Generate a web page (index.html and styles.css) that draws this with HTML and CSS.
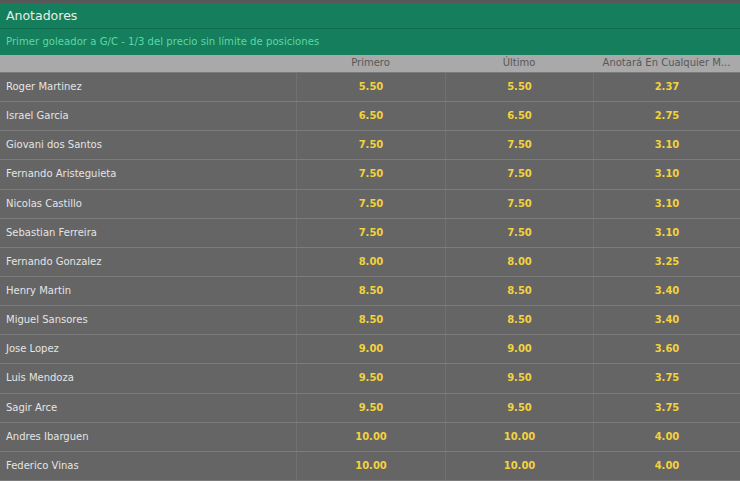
FILE: index.html
```html
<!DOCTYPE html>
<html lang="es">
<head>
<meta charset="utf-8">
<link rel="stylesheet" href="styles.css">
</head>
<body>
<div class="market">
  <div class="title">Anotadores</div>
  <div class="subtitle">Primer goleador a G/C - 1/3 del precio sin límite de posiciones</div>
  <div class="grid head">
    <div class="c name"></div>
    <div class="c">Primero</div>
    <div class="c">Último</div>
    <div class="c" title="Anotará En Cualquier Momento">Anotará En Cualquier M...</div>
  </div>
  <div class="grid row"><div class="c name">Roger Martinez</div><div class="c odd">5.50</div><div class="c odd">5.50</div><div class="c odd">2.37</div></div>
  <div class="grid row"><div class="c name">Israel Garcia</div><div class="c odd">6.50</div><div class="c odd">6.50</div><div class="c odd">2.75</div></div>
  <div class="grid row"><div class="c name">Giovani dos Santos</div><div class="c odd">7.50</div><div class="c odd">7.50</div><div class="c odd">3.10</div></div>
  <div class="grid row"><div class="c name">Fernando Aristeguieta</div><div class="c odd">7.50</div><div class="c odd">7.50</div><div class="c odd">3.10</div></div>
  <div class="grid row"><div class="c name">Nicolas Castillo</div><div class="c odd">7.50</div><div class="c odd">7.50</div><div class="c odd">3.10</div></div>
  <div class="grid row"><div class="c name">Sebastian Ferreira</div><div class="c odd">7.50</div><div class="c odd">7.50</div><div class="c odd">3.10</div></div>
  <div class="grid row"><div class="c name">Fernando Gonzalez</div><div class="c odd">8.00</div><div class="c odd">8.00</div><div class="c odd">3.25</div></div>
  <div class="grid row"><div class="c name">Henry Martin</div><div class="c odd">8.50</div><div class="c odd">8.50</div><div class="c odd">3.40</div></div>
  <div class="grid row"><div class="c name">Miguel Sansores</div><div class="c odd">8.50</div><div class="c odd">8.50</div><div class="c odd">3.40</div></div>
  <div class="grid row"><div class="c name">Jose Lopez</div><div class="c odd">9.00</div><div class="c odd">9.00</div><div class="c odd">3.60</div></div>
  <div class="grid row"><div class="c name">Luis Mendoza</div><div class="c odd">9.50</div><div class="c odd">9.50</div><div class="c odd">3.75</div></div>
  <div class="grid row"><div class="c name">Sagir Arce</div><div class="c odd">9.50</div><div class="c odd">9.50</div><div class="c odd">3.75</div></div>
  <div class="grid row"><div class="c name">Andres Ibarguen</div><div class="c odd">10.00</div><div class="c odd">10.00</div><div class="c odd">4.00</div></div>
  <div class="grid row"><div class="c name">Federico Vinas</div><div class="c odd">10.00</div><div class="c odd">10.00</div><div class="c odd">4.00</div></div>
</div>
</body>
</html>
```
FILE: styles.css
```css
html, body {
  margin: 0;
  padding: 0;
  background: #656565;
}
body {
  font-family: "DejaVu Sans", Verdana, sans-serif;
  width: 740px;
  height: 481px;
  overflow: hidden;
}
.market {
  border-top: 3px solid #585858;
}
.title {
  height: 25px;
  line-height: 25px;
  background: #157e5c;
  color: #e8eee9;
  font-size: 12.5px;
  padding-left: 6px;
  border-bottom: 1px solid #0f6e4e;
}
.subtitle {
  height: 26px;
  line-height: 26px;
  background: #157e5c;
  color: #5ad9a4;
  font-size: 10.15px;
  padding-left: 6px;
}
.grid {
  display: grid;
  grid-template-columns: 296px 149px 148px 147px;
}
.head {
  height: 17px;
  line-height: 16px;
  background: #a9a9a9;
  color: #585858;
  font-size: 10px;
  border-bottom: 1px solid #7a7a7a;
}
.head .c {
  text-align: center;
  white-space: nowrap;
  overflow: hidden;
  padding: 0 8px;
}
.row {
  height: 28.15px;
  line-height: 28px;
  border-bottom: 1px solid #7c7c7c;
  font-size: 10px;
}
.row .c + .c {
  border-left: 1px solid #707070;
}
.row .name {
  color: #e4e4e4;
  padding-left: 6px;
}
.odd {
  color: #f3d23d;
  text-align: center;
  font-weight: bold;
}
```
